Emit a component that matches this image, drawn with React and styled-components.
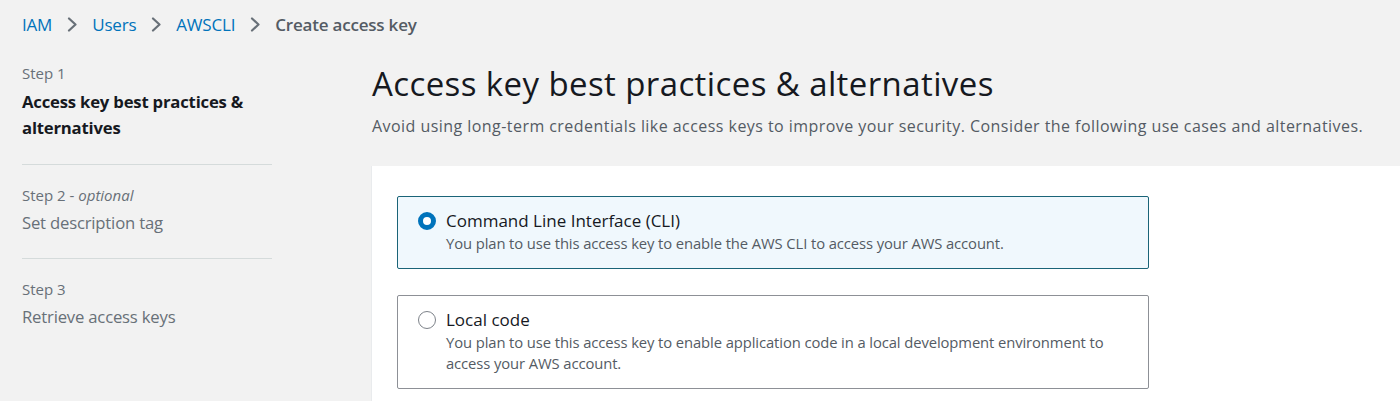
import React from "react";
import styled, { createGlobalStyle } from "styled-components";

const Global = createGlobalStyle`
  html, body { margin: 0; padding: 0; background: #f2f2f2; }
  body { font-family: "Open Sans", "Noto Sans", Arial, sans-serif; color: #16191f; }
  * { box-sizing: border-box; }
`;

const Page = styled.div`
  width: 1400px;
  height: 401px;
  overflow: hidden;
  background: #f2f2f2;
  display: flex;
  flex-direction: column;
`;

const Breadcrumbs = styled.nav`
  display: flex;
  align-items: center;
  gap: 14px;
  padding: 0 22px;
  height: 48px;
  font-size: 17px;
  flex-shrink: 0;
`;

const Crumb = styled.a`
  color: ${(p) => (p.$current ? "#545b64" : "#0073bb")};
  font-weight: ${(p) => (p.$current ? 600 : 400)};
  text-decoration: none;
  letter-spacing: -0.2px;
`;

const Chevron = styled.svg`
  width: 12px;
  height: 15px;
  color: #687078;
`;

const Body = styled.div`
  display: flex;
  flex: 1;
`;

const Side = styled.aside`
  width: 250px;
  margin-left: 22px;
  padding-top: 15px;
  flex-shrink: 0;
`;

const Step = styled.div`
  padding: ${(p) => (p.$first ? "0 0 23px" : "20px 0 22px")};
  border-bottom: ${(p) => (p.$last ? "none" : "1px solid #d5dbdb")};
`;

const StepLabel = styled.div`
  font-size: 15px;
  line-height: 20px;
  color: #687078;
  margin-bottom: ${(p) => (p.$first ? 6 : 5)}px;
  em { font-style: italic; }
`;

const StepTitle = styled.div`
  font-size: 16.7px;
  line-height: 26px;
  color: ${(p) => (p.$active ? "#16191f" : "#687078")};
  font-weight: ${(p) => (p.$active ? 700 : 400)};
  letter-spacing: -0.2px;
`;

const Main = styled.main`
  margin-left: 99px;
  flex: 1;
  display: flex;
  flex-direction: column;
`;

const Header = styled.header`
  padding: 16px 0 0 1px;
  height: 118px;
  flex-shrink: 0;
`;

const Heading = styled.h1`
  margin: 0;
  font-weight: 400;
  font-size: 33px;
  line-height: 40px;
  color: #16191f;
  letter-spacing: 0.4px;
`;

const Description = styled.p`
  margin: 11px 0 0;
  font-size: 16px;
  line-height: 22px;
  color: #545b64;
  letter-spacing: 0.45px;
  white-space: nowrap;
`;

const Panel = styled.section`
  flex: 1;
  background: #ffffff;
  border-left: 1px solid #e9ebed;
  padding: 30px 0 0 25px;
  display: flex;
  flex-direction: column;
  gap: 26px;
`;

const Tile = styled.label`
  width: 752px;
  display: flex;
  gap: 10px;
  padding: 12px 20px 14px;
  border: 1px solid ${(p) => (p.$selected ? "#1a6478" : "#8d9096")};
  background: ${(p) => (p.$selected ? "#f0f8fd" : "#ffffff")};
  border-radius: 2px;
`;

const Radio = styled.span`
  width: 18px;
  height: 18px;
  margin-top: 3px;
  border-radius: 50%;
  flex-shrink: 0;
  ${(p) =>
    p.$checked
      ? "border: 5.5px solid #0073bb; background: #fff;"
      : "border: 1.5px solid #7d8289; background: #fff;"}
`;

const TileText = styled.div`
  display: flex;
  flex-direction: column;
`;

const TileTitle = styled.div`
  font-size: 17px;
  line-height: 24px;
  color: #16191f;
  letter-spacing: 0;
`;

const TileDesc = styled.div`
  font-size: 14.8px;
  line-height: 21px;
  color: #545b64;
  letter-spacing: -0.1px;
`;

const Arrow = () => (
  <Chevron viewBox="0 0 12 15" fill="none">
    <path d="M3 1.5 L9.5 7.5 L3 13.5" stroke="currentColor" strokeWidth="2.2" strokeLinecap="round" strokeLinejoin="round" />
  </Chevron>
);

export default function App() {
  return (
    <Page>
      <Global />
      <Breadcrumbs>
        <Crumb href="#">IAM</Crumb>
        <Arrow />
        <Crumb href="#">Users</Crumb>
        <Arrow />
        <Crumb href="#">AWSCLI</Crumb>
        <Arrow />
        <Crumb $current>Create access key</Crumb>
      </Breadcrumbs>
      <Body>
        <Side>
          <Step $first>
            <StepLabel $first>Step 1</StepLabel>
            <StepTitle $active>Access key best practices &amp; alternatives</StepTitle>
          </Step>
          <Step>
            <StepLabel>
              Step 2 - <em>optional</em>
            </StepLabel>
            <StepTitle>Set description tag</StepTitle>
          </Step>
          <Step $last>
            <StepLabel>Step 3</StepLabel>
            <StepTitle>Retrieve access keys</StepTitle>
          </Step>
        </Side>
        <Main>
          <Header>
            <Heading>Access key best practices &amp; alternatives</Heading>
            <Description>
              Avoid using long-term credentials like access keys to improve your security. Consider the following use cases and alternatives.
            </Description>
          </Header>
          <Panel>
            <Tile $selected>
              <Radio $checked />
              <TileText>
                <TileTitle>Command Line Interface (CLI)</TileTitle>
                <TileDesc>You plan to use this access key to enable the AWS CLI to access your AWS account.</TileDesc>
              </TileText>
            </Tile>
            <Tile>
              <Radio />
              <TileText>
                <TileTitle>Local code</TileTitle>
                <TileDesc>
                  You plan to use this access key to enable application code in a local development environment to access your AWS account.
                </TileDesc>
              </TileText>
            </Tile>
          </Panel>
        </Main>
      </Body>
    </Page>
  );
}
